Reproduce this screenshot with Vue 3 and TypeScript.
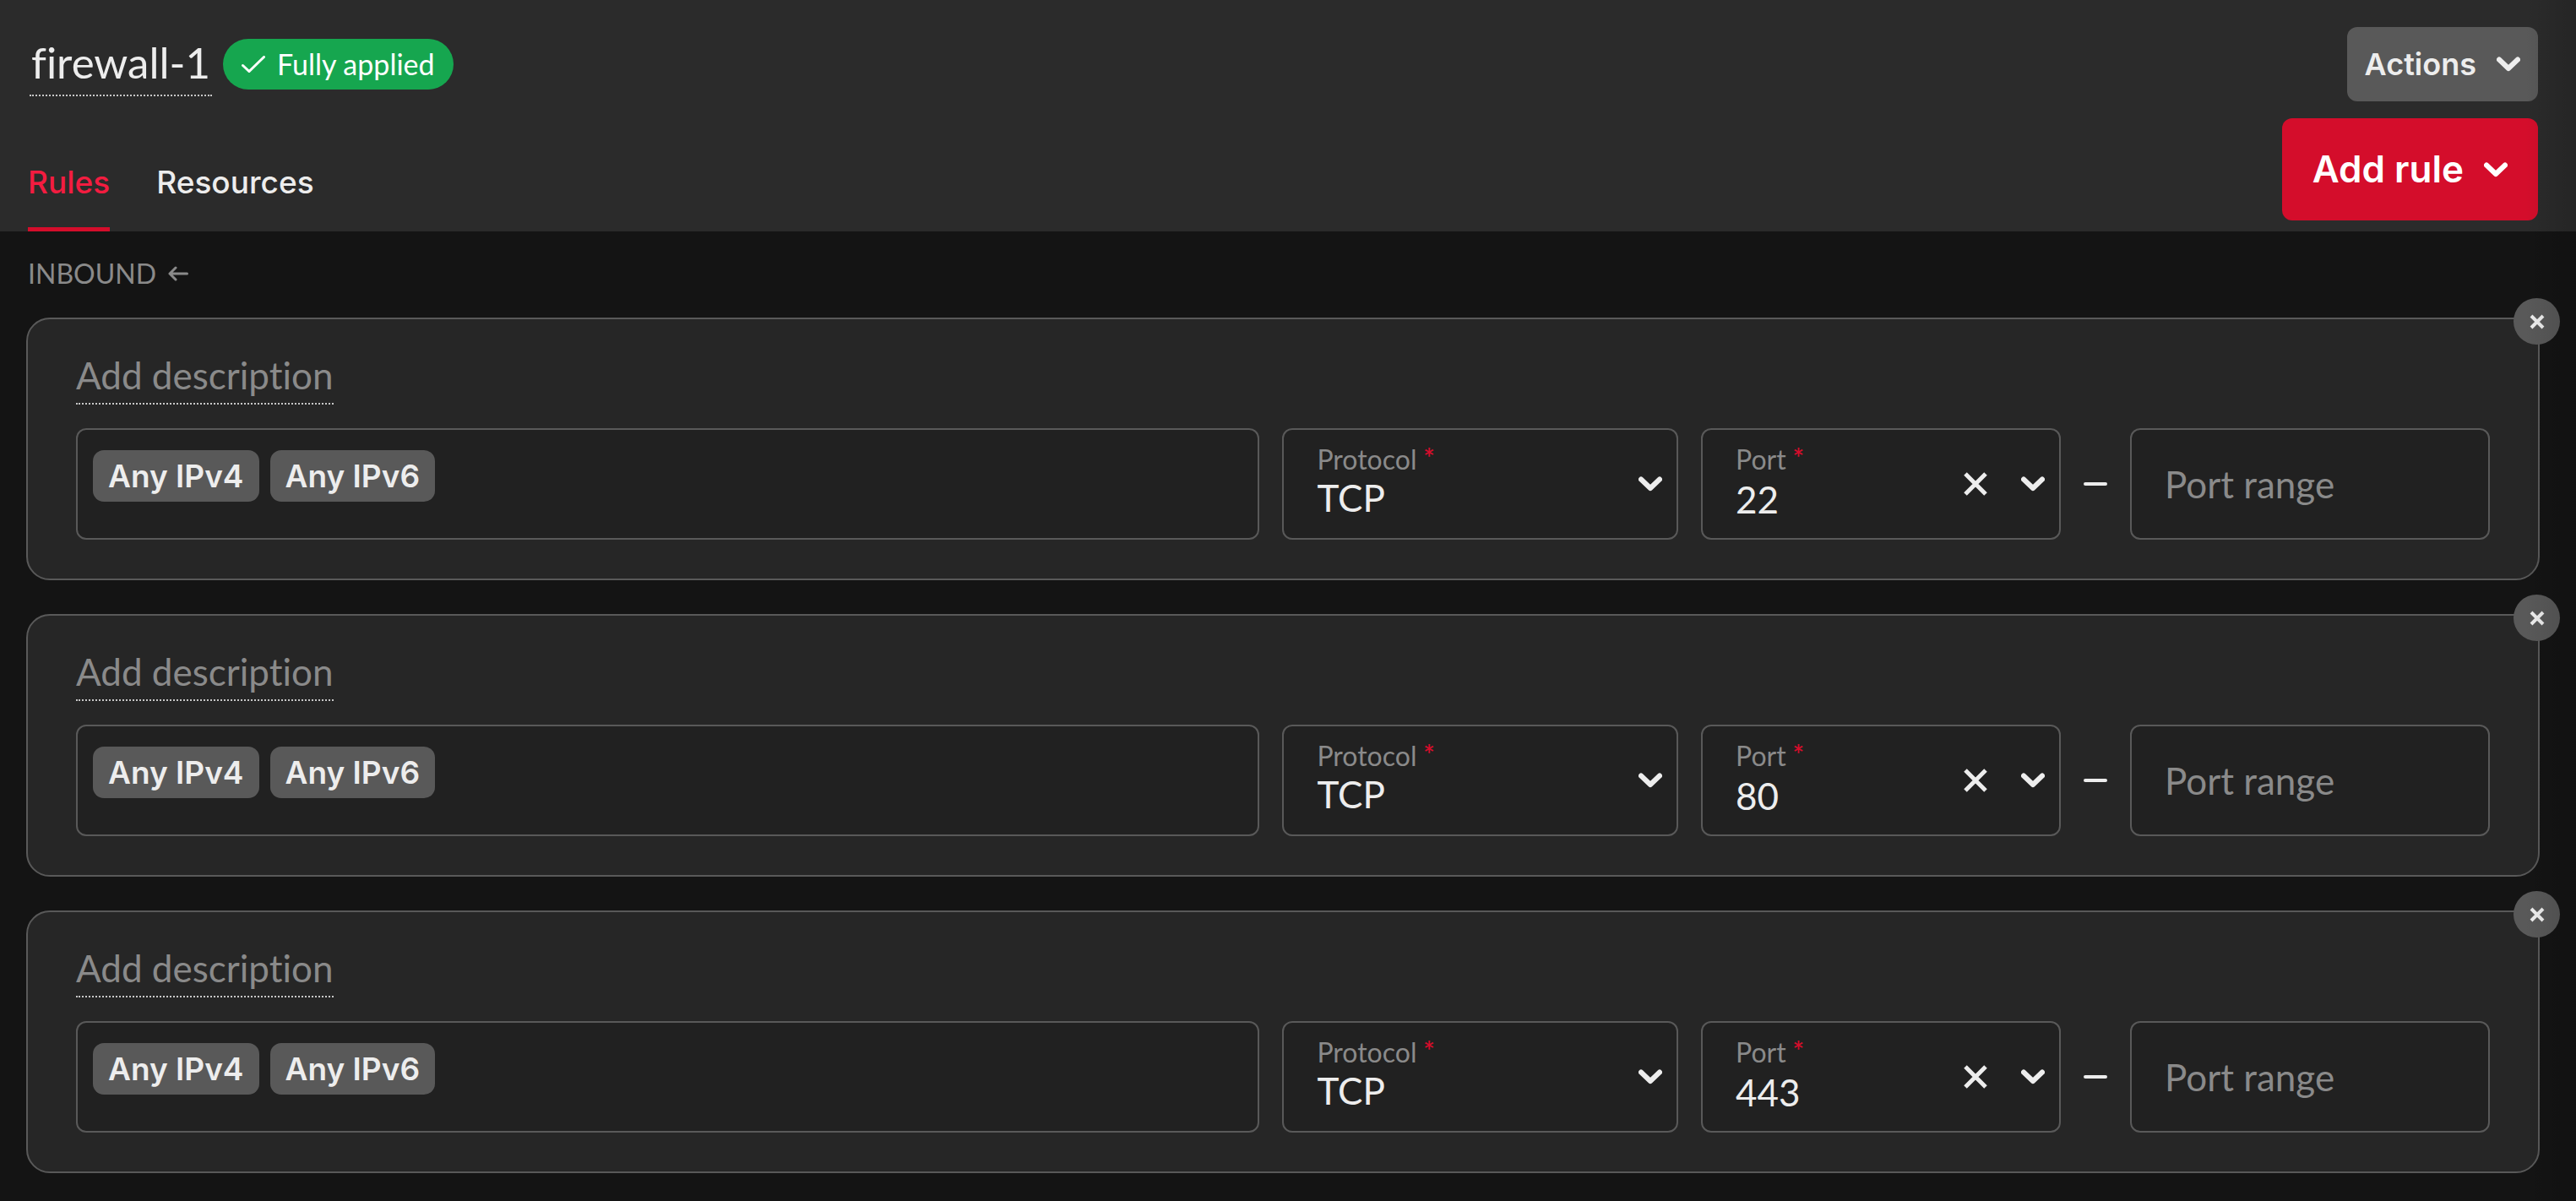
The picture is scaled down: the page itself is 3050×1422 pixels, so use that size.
<script setup lang="ts">
import { ref } from 'vue'

interface Rule {
  id: number
  sources: string[]
  protocol: string
  port: string
  range: string
}

const rules = ref<Rule[]>([
  { id: 1, sources: ['Any IPv4', 'Any IPv6'], protocol: 'TCP', port: '22', range: '' },
  { id: 2, sources: ['Any IPv4', 'Any IPv6'], protocol: 'TCP', port: '80', range: '' },
  { id: 3, sources: ['Any IPv4', 'Any IPv6'], protocol: 'TCP', port: '443', range: '' },
])

const removeRule = (id: number) => {
  rules.value = rules.value.filter((rule) => rule.id !== id)
}
</script>

<template>
  <div class="page">
    <header class="header">
      <div class="header-main">
        <div class="title-row">
          <h1 class="title"><button type="button" class="editable name">firewall-1</button></h1>
          <span class="badge">
            <svg class="check" viewBox="0 0 28 20" aria-hidden="true">
              <path d="M1.5 11.5 9 18.5 26.5 1.5" />
            </svg>
            Fully applied
          </span>
        </div>
        <nav class="tabs">
          <a href="#rules" class="tab active">Rules</a>
          <a href="#resources" class="tab">Resources</a>
        </nav>
      </div>
      <div class="header-actions">
        <button type="button" class="btn btn-grey">
          Actions
          <svg class="chevron" viewBox="0 0 28 18" aria-hidden="true"><path d="M3 3.5 14 14 25 3.5" /></svg>
        </button>
        <button type="button" class="btn btn-red">
          Add rule
          <svg class="chevron" viewBox="0 0 28 18" aria-hidden="true"><path d="M3 3.5 14 14 25 3.5" /></svg>
        </button>
      </div>
    </header>

    <main class="content">
      <h2 class="section-title">
        INBOUND
        <svg class="arrow" viewBox="0 0 24 18" aria-hidden="true">
          <path d="M22.5 9H2M9 2 2 9l7 7" />
        </svg>
      </h2>

      <section v-for="rule in rules" :key="rule.id" class="card">
        <button type="button" class="remove" aria-label="Remove rule" @click="removeRule(rule.id)">
          <svg viewBox="0 0 18 18" aria-hidden="true"><path d="M2 2 16 16M16 2 2 16" /></svg>
        </button>
        <button type="button" class="editable description">Add description</button>
        <div class="fields">
          <div class="field sources">
            <span v-for="source in rule.sources" :key="source" class="chip">{{ source }}</span>
          </div>
          <div class="field">
            <label class="label" :for="`protocol-${rule.id}`">Protocol <span class="required">*</span></label>
            <select :id="`protocol-${rule.id}`" v-model="rule.protocol" class="control">
              <option>TCP</option>
              <option>UDP</option>
              <option>ICMP</option>
            </select>
            <div class="icons">
              <svg class="chevron" viewBox="0 0 28 18" aria-hidden="true"><path d="M3 3.5 14 14 25 3.5" /></svg>
            </div>
          </div>
          <div class="field">
            <label class="label" :for="`port-${rule.id}`">Port <span class="required">*</span></label>
            <input :id="`port-${rule.id}`" v-model="rule.port" type="text" class="control" />
            <div class="icons">
              <button type="button" class="clear" aria-label="Clear port" @click="rule.port = ''">
                <svg viewBox="0 0 28 28" aria-hidden="true"><path d="M2 2 26 26M26 2 2 26" /></svg>
              </button>
              <svg class="chevron" viewBox="0 0 28 18" aria-hidden="true"><path d="M3 3.5 14 14 25 3.5" /></svg>
            </div>
          </div>
          <span class="dash"></span>
          <div class="field">
            <input
              v-model="rule.range"
              type="text"
              class="control range"
              placeholder="Port range"
              aria-label="Port range"
            />
          </div>
        </div>
      </section>
    </main>
  </div>
</template>

<style>
body {
  background: #141414;
}
</style>

<style scoped>
.page {
  position: relative;
  min-height: 100vh;
  background: #141414;
  color: #ededed;
  font-family: Lato, sans-serif;
  font-size: 44px;
  font-variant-ligatures: none;
}

.page::after {
  content: '';
  position: absolute;
  top: 0;
  right: 0;
  bottom: 0;
  width: 60px;
  background: linear-gradient(to right, transparent, rgba(0, 0, 0, 0.14));
  pointer-events: none;
}

button,
input,
select {
  margin: 0;
  padding: 0;
  border: 0;
  background: none;
  color: inherit;
  font: inherit;
}

svg {
  display: block;
  fill: none;
  stroke: currentColor;
}

.header {
  display: flex;
  justify-content: space-between;
  padding: 32px 45px 0 33px;
  background: #2b2b2b;
}

.header-main {
  display: flex;
  flex-direction: column;
  justify-content: space-between;
}

.title-row {
  display: flex;
  align-items: flex-start;
  gap: 13px;
}

.title {
  margin: 0 0 0 2px;
  font-size: 51px;
  font-weight: 400;
}

.editable {
  display: block;
  border-bottom: 2px dotted #c8c8c8;
}

.name {
  padding: 12px 2px 8px;
  line-height: 60px;
}

.badge {
  display: flex;
  align-items: center;
  gap: 14px;
  margin-top: 14px;
  padding: 0 22px;
  border-radius: 30px;
  background: #16a64f;
  color: #fff;
  font-size: 34px;
  line-height: 60px;
}

.check {
  width: 28px;
  height: 20px;
  stroke-width: 3;
  stroke-linecap: round;
}

.tabs {
  display: flex;
  gap: 55px;
}

.tab {
  padding: 0 0 25px;
  border-bottom: 5px solid transparent;
  color: #ededed;
  font-family: Inter, sans-serif;
  font-size: 37px;
  font-weight: 500;
  line-height: 56px;
  text-decoration: none;
}

.tab.active {
  border-color: #d40d2b;
  color: #f31c40;
}

.header-actions {
  display: flex;
  flex-direction: column;
  align-items: flex-end;
  gap: 20px;
  padding-bottom: 13px;
}

.btn {
  display: flex;
  align-items: center;
  gap: 24px;
  border-radius: 12px;
  font-family: Inter, sans-serif;
  font-weight: 600;
}

.btn-grey {
  padding: 0 21px;
  background: #595959;
  font-size: 36px;
  line-height: 88px;
}

.btn-red {
  padding: 0 36px;
  background: #d40d2b;
  color: #fff;
  font-size: 44px;
  line-height: 121px;
}

.chevron {
  width: 28px;
  height: 18px;
  stroke-width: 6;
  stroke-linecap: round;
  stroke-linejoin: round;
}

.content {
  display: flex;
  flex-direction: column;
  gap: 40px;
  padding: 30px 43px 33px 31px;
}

.section-title {
  display: flex;
  align-items: center;
  gap: 14px;
  margin: 0 0 -8px 2px;
  color: #8a8a8a;
  font-size: 32px;
  font-weight: 400;
  line-height: 40px;
}

.arrow {
  width: 24px;
  height: 18px;
  stroke-width: 3;
  stroke-linecap: round;
  stroke-linejoin: round;
}

.card {
  position: relative;
  padding: 38px 57px 46px;
  border: 2px solid #595959;
  border-radius: 28px;
  background: #262626;
}

.remove {
  position: absolute;
  top: -25px;
  right: -26px;
  display: grid;
  place-items: center;
  width: 55px;
  height: 55px;
  border-radius: 50%;
  background: #595959;
}

.remove svg {
  width: 18px;
  height: 18px;
  stroke-width: 4;
}

.description {
  margin-bottom: 28px;
  padding-bottom: 5px;
  color: #8a8a8a;
  line-height: 56px;
}

.fields {
  display: grid;
  grid-template-columns: 329fr 110fr 100fr 28px 100fr;
  align-items: center;
  gap: 27px;
}

.field {
  position: relative;
  box-sizing: border-box;
  height: 132px;
  border: 2px solid #595959;
  border-radius: 12px;
  background: #212121;
}

.sources {
  display: flex;
  align-items: flex-start;
  gap: 13px;
  padding: 24px 18px;
}

.chip {
  padding: 0 18px;
  border-radius: 13px;
  background: #595959;
  font-family: Inter, sans-serif;
  font-size: 37px;
  font-weight: 600;
  line-height: 61px;
}

.label {
  position: absolute;
  top: 15px;
  left: 39px;
  display: flex;
  gap: 8px;
  color: #8a8a8a;
  font-size: 32px;
  line-height: 40px;
  pointer-events: none;
}

.required {
  color: #d40d2b;
  font-family: Inter, sans-serif;
  font-size: 26px;
  line-height: 32px;
}

.control {
  box-sizing: border-box;
  width: 100%;
  height: 100%;
  padding: 36px 39px 0;
  outline: none;
  appearance: none;
}

select.control {
  padding-top: 32px;
}

.control.range {
  padding-top: 0;
}

.control::placeholder {
  color: #8a8a8a;
  opacity: 1;
}

.icons {
  position: absolute;
  top: 0;
  right: 17px;
  bottom: 0;
  display: flex;
  align-items: center;
  gap: 40px;
  pointer-events: none;
}

.clear {
  pointer-events: auto;
}

.clear svg {
  width: 28px;
  height: 28px;
  stroke-width: 5;
}

.dash {
  height: 4px;
  border-radius: 2px;
  background: #ededed;
}
</style>
